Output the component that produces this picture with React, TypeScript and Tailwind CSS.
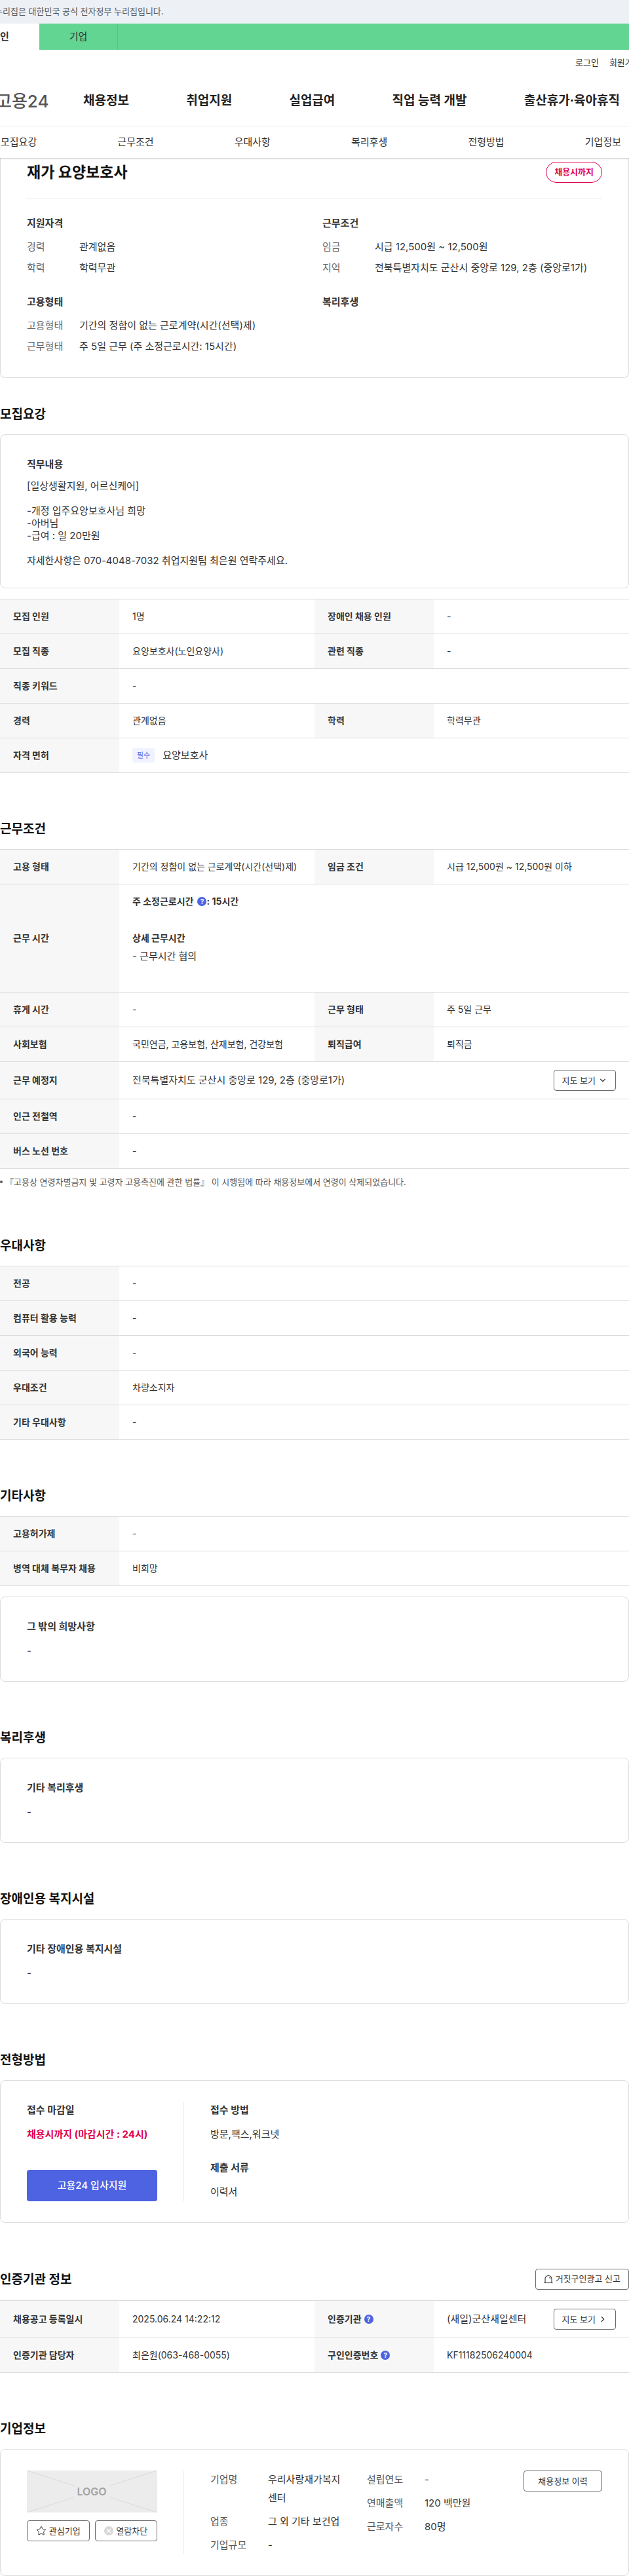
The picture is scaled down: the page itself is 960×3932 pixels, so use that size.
import React from 'react';
import { ChevronDown, ChevronRight, Star } from 'lucide-react';

type Cell = { label: React.ReactNode; value: React.ReactNode };

const mainMenu = ['채용정보', '취업지원', '실업급여', '직업 능력 개발', '출산휴가·육아휴직'];

const sectionTabs = [
  { label: '모집요강', href: '#recruit' },
  { label: '근무조건', href: '#work' },
  { label: '우대사항', href: '#prefer' },
  { label: '복리후생', href: '#welfare' },
  { label: '전형방법', href: '#apply' },
  { label: '기업정보', href: '#company' },
];

const HelpButton = ({ label }: { label: string }) => (
  <button
    type="button"
    aria-label={label}
    className="inline-flex h-3.5 w-3.5 items-center justify-center rounded-full bg-[#4d63e2] align-middle text-[10px] leading-none font-bold text-white"
  >
    ?
  </button>
);

const SmallButton = ({ children, className = '' }: { children: React.ReactNode; className?: string }) => (
  <button
    type="button"
    className={`flex h-8 shrink-0 items-center justify-center gap-1 rounded border border-[#6b6b6b] bg-white text-[13px] whitespace-nowrap text-[#333] ${className}`}
  >
    {children}
  </button>
);

const SirenIcon = () => (
  <svg className="h-3.5 w-3.5" viewBox="0 0 14 14" fill="none" stroke="#333" strokeWidth="1.1" aria-hidden="true">
    <path d="M2 12V6.5a5 5 0 0 1 10 0V12" />
    <path d="M.5 12.5h13" />
    <path d="M8.5 4.2a2.4 2.4 0 0 1 1.5 2.3" />
  </svg>
);

const BlockIcon = () => (
  <svg className="h-3.5 w-3.5" viewBox="0 0 14 14" aria-hidden="true">
    <circle cx="7" cy="7" r="7" fill="#d8d8d8" />
    <path d="M4.2 4.2l5.6 5.6M9.8 4.2l-5.6 5.6" stroke="#fff" strokeWidth="1.3" />
  </svg>
);

const Section = ({
  id,
  title,
  action,
  children,
}: {
  id: string;
  title: string;
  action?: React.ReactNode;
  children: React.ReactNode;
}) => (
  <section id={id}>
    <div className="mb-4 flex items-center justify-between">
      <h2 className="pt-0.5 text-[19px] leading-7 font-bold text-[#111]">{title}</h2>
      {action}
    </div>
    {children}
  </section>
);

const Box = ({ children }: { children: React.ReactNode }) => (
  <div className="rounded-lg border border-[#dcdcdc] px-10 py-8">{children}</div>
);

const BoxTitle = ({ children }: { children: React.ReactNode }) => (
  <h3 className="mb-2.5 text-[15px] leading-[26px] font-bold text-[#333]">{children}</h3>
);

// rows hold one cell (full width) or two cells side by side
const DataTable = ({ caption, rows }: { caption: string; rows: Cell[][] }) => (
  <table className="w-full table-fixed border-separate border-spacing-0 border-t border-[#dcdcdc] text-left text-sm leading-7">
    <caption className="sr-only">{caption}</caption>
    <colgroup>
      <col className="w-[182px]" />
      <col />
      <col className="w-[182px]" />
      <col />
    </colgroup>
    <tbody>
      {rows.map((cells, i) => (
        <tr key={i}>
          {cells.map((cell, j) => (
            <React.Fragment key={j}>
              <th scope="row" className="border-b border-[#dcdcdc] bg-[#f7f7f7] px-5 py-3 font-bold whitespace-nowrap text-[#333]">
                {cell.label}
              </th>
              <td
                colSpan={cells.length === 1 ? 3 : 1}
                className="border-b border-[#dcdcdc] px-5 py-3 whitespace-nowrap text-[#333]"
              >
                {cell.value}
              </td>
            </React.Fragment>
          ))}
        </tr>
      ))}
    </tbody>
  </table>
);

const Summary = ({ title, items }: { title: string; items: [string, string][] }) => (
  <div className="text-[15px] leading-6">
    <h3 className="mb-3 font-bold text-[#333]">{title}</h3>
    <dl className="space-y-2">
      {items.map(([label, value]) => (
        <div key={label} className="flex">
          <dt className="w-20 shrink-0 text-[#666]">{label}</dt>
          <dd className="whitespace-nowrap text-[#333]">{value}</dd>
        </div>
      ))}
    </dl>
  </div>
);

const CompanyFacts = ({ items, className }: { items: [string, string][]; className: string }) => (
  <dl className={`space-y-2 ${className}`}>
    {items.map(([label, value]) => (
      <div key={label} className="flex">
        <dt className="w-[88px] shrink-0 text-[#555]">{label}</dt>
        <dd className="text-[#333]">{value}</dd>
      </div>
    ))}
  </dl>
);

const Header = () => (
  <header className="relative z-10 bg-white shadow-[0_1px_2px_rgba(0,0,0,0.25)]">
    <div className="flex h-9 items-center bg-[#edf0f5]">
      <p className="-ml-2 text-[13px] whitespace-nowrap text-[#555]">누리집은 대한민국 공식 전자정부 누리집입니다.</p>
    </div>
    <div className="flex h-10 bg-[#62d593] text-[15px]">
      <a href="#personal" className="-ml-[60px] flex w-[120px] items-center justify-center bg-white font-bold text-[#333]">
        개인
      </a>
      <a href="#business" className="flex w-[120px] items-center justify-center border-r border-[#58c285] text-[#333]">
        기업
      </a>
    </div>
    <div className="flex h-10 items-center justify-end">
      <div className="flex w-[82px] gap-4 text-[13px] whitespace-nowrap text-[#333]">
        <a href="#login">로그인</a>
        <a href="#join">회원가입</a>
      </div>
    </div>
    <div className="flex h-[76px] items-center">
      <a href="#home" className="w-[127px] shrink-0">
        <span className="-ml-1.5 text-[26px] font-medium text-[#555]">고용24</span>
      </a>
      <nav className="flex-1 pr-3.5">
        <ul className="flex justify-between text-[19px] font-bold whitespace-nowrap text-[#222]">
          {mainMenu.map((item) => (
            <li key={item}>
              <a href="#menu">{item}</a>
            </li>
          ))}
        </ul>
      </nav>
    </div>
    <nav className="border-t border-[#ebebeb]">
      <ul className="flex h-12 items-center justify-between pr-3 pl-px text-[15px] text-[#333]">
        {sectionTabs.map((tab) => (
          <li key={tab.label}>
            <a href={tab.href}>{tab.label}</a>
          </li>
        ))}
      </ul>
    </nav>
  </header>
);

const App: React.FC = () => {
  return (
    <div className="w-full overflow-hidden bg-white font-['Inter','Noto_Sans_CJK_KR',sans-serif] text-[#333]">
      <Header />

      <main>
        {/* Job summary */}
        <div className="mb-10 rounded-b-lg border-x border-b border-[#dcdcdc] px-10 pb-[35px]">
          <div className="flex items-center justify-between border-b border-[#ebebeb] pt-1.5 pb-6">
            <h1 className="text-[23px] leading-8 font-bold text-[#111]">재가 요양보호사</h1>
            <span className="flex h-8 items-center rounded-full border border-[#e0004d] px-3 text-[13px] font-bold text-[#e0004d]">
              채용시까지
            </span>
          </div>
          <div className="grid grid-cols-2 gap-x-6 gap-y-7 pt-[25px]">
            <Summary title="지원자격" items={[['경력', '관계없음'], ['학력', '학력무관']]} />
            <Summary
              title="근무조건"
              items={[
                ['임금', '시급 12,500원 ~ 12,500원'],
                ['지역', '전북특별자치도 군산시 중앙로 129, 2층 (중앙로1가)'],
              ]}
            />
            <Summary
              title="고용형태"
              items={[
                ['고용형태', '기간의 정함이 없는 근로계약(시간(선택)제)'],
                ['근무형태', '주 5일 근무 (주 소정근로시간: 15시간)'],
              ]}
            />
            <Summary title="복리후생" items={[]} />
          </div>
        </div>

        <div className="space-y-[70px]">
          <Section id="recruit" title="모집요강">
            <div className="space-y-4">
              <Box>
                <BoxTitle>직무내용</BoxTitle>
                <p className="text-[15px] leading-[19px] whitespace-pre-line">
                  {`[일상생활지원, 어르신케어]

-개정 입주요양보호사님 희망
-아버님
-급여 : 일 20만원

자세한사항은 070-4048-7032 취업지원팀 최은원 연락주세요.`}
                </p>
              </Box>
              <DataTable
                caption="모집요강"
                rows={[
                  [{ label: '모집 인원', value: '1명' }, { label: '장애인 채용 인원', value: '-' }],
                  [{ label: '모집 직종', value: '요양보호사(노인요양사)' }, { label: '관련 직종', value: '-' }],
                  [{ label: '직종 키워드', value: '-' }],
                  [{ label: '경력', value: '관계없음' }, { label: '학력', value: '학력무관' }],
                  [
                    {
                      label: '자격 면허',
                      value: (
                        <div className="flex items-center gap-3">
                          <span className="rounded bg-[#f0f2ff] px-[7px] text-[11px] leading-[22px] text-[#5a6be8]">필수</span>
                          <span className="text-[15px]">요양보호사</span>
                        </div>
                      ),
                    },
                  ],
                ]}
              />
            </div>
          </Section>

          <Section id="work" title="근무조건">
            <DataTable
              caption="근무조건"
              rows={[
                [
                  { label: '고용 형태', value: '기간의 정함이 없는 근로계약(시간(선택)제)' },
                  { label: '임금 조건', value: '시급 12,500원 ~ 12,500원 이하' },
                ],
                [
                  {
                    label: '근무 시간',
                    value: (
                      <div className="pb-7">
                        <p className="mb-7 flex items-center font-bold">
                          <span className="mr-1.5">주 소정근로시간</span>
                          <HelpButton label="주 소정근로시간 도움말" />
                          <span>: 15시간</span>
                        </p>
                        <p className="font-bold">상세 근무시간</p>
                        <p className="text-[15px]">- 근무시간 협의</p>
                      </div>
                    ),
                  },
                ],
                [{ label: '휴게 시간', value: '-' }, { label: '근무 형태', value: '주 5일 근무' }],
                [
                  { label: '사회보험', value: '국민연금, 고용보험, 산재보험, 건강보험' },
                  { label: '퇴직급여', value: '퇴직금' },
                ],
                [
                  {
                    label: '근무 예정지',
                    value: (
                      <div className="flex items-center justify-between text-[15px]">
                        <span>전북특별자치도 군산시 중앙로 129, 2층 (중앙로1가)</span>
                        <SmallButton className="px-3">
                          지도 보기
                          <ChevronDown className="h-3.5 w-3.5" />
                        </SmallButton>
                      </div>
                    ),
                  },
                ],
                [{ label: '인근 전철역', value: '-' }],
                [{ label: '버스 노선 번호', value: '-' }],
              ]}
            />
            <p className="mt-2 flex items-center gap-1 text-[13px] leading-6 text-[#555]">
              <span className="h-1 w-1 rounded-full bg-[#555]" />
              『고용상 연령차별금지 및 고령자 고용촉진에 관한 법률』 이 시행됨에 따라 채용정보에서 연령이 삭제되었습니다.
            </p>
          </Section>

          <Section id="prefer" title="우대사항">
            <DataTable
              caption="우대사항"
              rows={[
                [{ label: '전공', value: '-' }],
                [{ label: '컴퓨터 활용 능력', value: '-' }],
                [{ label: '외국어 능력', value: '-' }],
                [{ label: '우대조건', value: '차량소지자' }],
                [{ label: '기타 우대사항', value: '-' }],
              ]}
            />
          </Section>

          <Section id="etc" title="기타사항">
            <div className="space-y-4">
              <DataTable
                caption="기타사항"
                rows={[[{ label: '고용허가제', value: '-' }], [{ label: '병역 대체 복무자 채용', value: '비희망' }]]}
              />
              <Box>
                <BoxTitle>그 밖의 희망사항</BoxTitle>
                <p className="text-[15px] leading-7">-</p>
              </Box>
            </div>
          </Section>

          <Section id="welfare" title="복리후생">
            <Box>
              <BoxTitle>기타 복리후생</BoxTitle>
              <p className="text-[15px] leading-7">-</p>
            </Box>
          </Section>

          <Section id="facility" title="장애인용 복지시설">
            <Box>
              <BoxTitle>기타 장애인용 복지시설</BoxTitle>
              <p className="text-[15px] leading-7">-</p>
            </Box>
          </Section>

          <Section id="apply" title="전형방법">
            <Box>
              <div className="flex text-[15px] leading-7">
                <div className="flex w-60 shrink-0 flex-col justify-between border-r border-[#ebebeb] pr-10">
                  <div>
                    <BoxTitle>접수 마감일</BoxTitle>
                    <p className="font-bold whitespace-nowrap text-[#e0004d]">채용시까지 (마감시간 : 24시)</p>
                  </div>
                  <button type="button" className="h-12 rounded bg-[#4d63e2] font-medium text-white">
                    고용24 입사지원
                  </button>
                </div>
                <div className="space-y-6 pl-10">
                  <div>
                    <BoxTitle>접수 방법</BoxTitle>
                    <p>방문,팩스,워크넷</p>
                  </div>
                  <div>
                    <BoxTitle>제출 서류</BoxTitle>
                    <p>이력서</p>
                  </div>
                </div>
              </div>
            </Box>
          </Section>

          <Section
            id="agency"
            title="인증기관 정보"
            action={
              <SmallButton className="px-3">
                <SirenIcon />
                거짓구인광고 신고
              </SmallButton>
            }
          >
            <DataTable
              caption="인증기관 정보"
              rows={[
                [
                  { label: '채용공고 등록일시', value: '2025.06.24 14:22:12' },
                  {
                    label: (
                      <span className="flex items-center gap-1">
                        인증기관 <HelpButton label="인증기관 도움말" />
                      </span>
                    ),
                    value: (
                      <div className="flex items-center justify-between">
                        <span className="text-[15px]">(새일)군산새일센터</span>
                        <SmallButton className="px-3">
                          지도 보기
                          <ChevronRight className="h-3.5 w-3.5" />
                        </SmallButton>
                      </div>
                    ),
                  },
                ],
                [
                  { label: '인증기관 담당자', value: '최은원(063-468-0055)' },
                  {
                    label: (
                      <span className="flex items-center gap-1">
                        구인인증번호 <HelpButton label="구인인증번호 도움말" />
                      </span>
                    ),
                    value: 'KF11182506240004',
                  },
                ],
              ]}
            />
          </Section>

          <Section id="company" title="기업정보">
            <Box>
              <div className="flex text-[15px] leading-7">
                <div className="w-60 shrink-0 border-r border-[#ebebeb] pr-10">
                  <svg className="block h-16 w-full" viewBox="0 0 199 64" role="img" aria-label="LOGO">
                    <rect width="199" height="64" fill="#ececec" />
                    <path d="M0 0l72 23M199 0l-72 23M0 64l72-23M199 64l-72-23" stroke="#dcdcdc" strokeWidth="1.2" />
                    <text x="99" y="38" textAnchor="middle" fontSize="16" fontWeight="600" fill="#a3a3a3">
                      LOGO
                    </text>
                  </svg>
                  <div className="mt-3 grid grid-cols-2 gap-2">
                    <SmallButton>
                      <Star className="h-4 w-4" strokeWidth={1.5} />
                      관심기업
                    </SmallButton>
                    <SmallButton>
                      <BlockIcon />
                      열람차단
                    </SmallButton>
                  </div>
                </div>
                <div className="flex flex-1 items-start pl-10">
                  <CompanyFacts
                    className="mr-9 w-[203px]"
                    items={[['기업명', '우리사랑재가복지센터'], ['업종', '그 외 기타 보건업'], ['기업규모', '-']]}
                  />
                  <CompanyFacts
                    className="flex-1"
                    items={[['설립연도', '-'], ['연매출액', '120 백만원'], ['근로자수', '80명']]}
                  />
                  <SmallButton className="w-[120px]">채용정보 이력</SmallButton>
                </div>
              </div>
            </Box>
          </Section>
        </div>
      </main>
    </div>
  );
};

export default App;
